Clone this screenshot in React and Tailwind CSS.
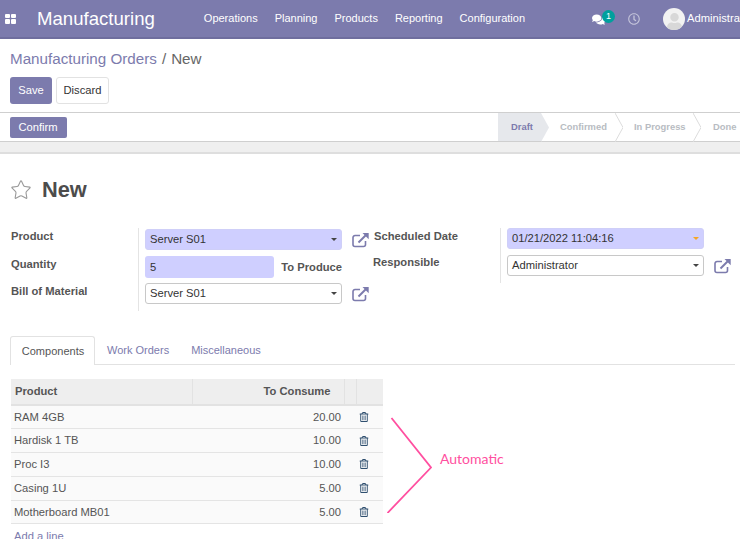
import React from 'react'
import { FaComments, FaRegClock, FaRegTrashAlt, FaUser } from 'react-icons/fa'
import { Star } from 'lucide-react'

const font = { fontFamily: '"Liberation Sans", Arial, sans-serif' }

const menus = ['Operations', 'Planning', 'Products', 'Reporting', 'Configuration']

const lines = [
  ['RAM 4GB', '20.00'],
  ['Hardisk 1 TB', '10.00'],
  ['Proc I3', '10.00'],
  ['Casing 1U', '5.00'],
  ['Motherboard MB01', '5.00'],
]

const ExternalIcon = () => (
  <svg width="18" height="16" viewBox="0 0 18 16" fill="none" stroke="#7c7bad" strokeWidth="1.6" className="shrink-0">
    <path d="M13.5 9v3.5a2 2 0 0 1-2 2H3a2 2 0 0 1-2-2V5.5a2 2 0 0 1 2-2h5" />
    <path d="M6.5 10.5 14.5 2.5" strokeWidth="2" />
    <path d="M10.5 1h6.2v6.2z" fill="#7c7bad" stroke="none" />
  </svg>
)

const Caret = ({ color = 'border-t-[#444]' }) => (
  <span className={`h-0 w-0 border-x-[3.5px] border-t-[3.5px] border-x-transparent ${color}`} />
)

const Select = ({ value, required, caret }) => (
  <div
    className={`flex h-[21px] w-[197px] items-center justify-between rounded-[3px] border pl-[4px] pr-[4px] text-[11.2px] text-[#333] ${
      required ? 'border-[#cfcff8] bg-[#cfcfff]' : 'border-[#c8c8c8] bg-white'
    }`}
  >
    <span>{value}</span>
    <Caret color={caret || 'border-t-[#444]'} />
  </div>
)

const Step = ({ label, width, active, last }) => (
  <div className={`relative flex h-full items-center text-[9.4px] font-bold ${width} ${active ? 'bg-[#e6e8ec] text-[#7c7bad]' : 'text-[#b8bcc2]'}`}>
    {label}
    {!last && (
      <svg width="8" height="29" viewBox="0 0 8 29" className="absolute -right-[8px] top-0 z-10">
        <path d="M0 0 8 14.5 0 29" fill={active ? '#e6e8ec' : '#fff'} stroke={active ? 'none' : '#dcdcdc'} />
      </svg>
    )}
  </div>
)

const App = () => {
  return (
    <div className="h-[539px] w-[740px] overflow-hidden bg-white text-[11.2px] text-[#444]" style={font}>
      <div className="flex h-[39px] items-center whitespace-nowrap border-b-2 border-[#6f6e9e] bg-[#7c7bad] text-white">
        <div className="ml-[5px] grid h-[10px] w-[11px] shrink-0 grid-cols-2 gap-[1px]">
          <span className="rounded-[1px] bg-white" />
          <span className="rounded-[1px] bg-white" />
          <span className="rounded-[1px] bg-white" />
          <span className="rounded-[1px] bg-white" />
        </div>
        <span className="ml-[21px] shrink-0 text-[18.6px]">Manufacturing</span>
        <div className="ml-[49px] flex shrink-0 gap-[17px] text-[11px]">
          {menus.map((m) => (
            <span key={m}>{m}</span>
          ))}
        </div>
        <div className="relative ml-[67px] mt-[2px] shrink-0">
          <FaComments size={13} />
          <span className="absolute -right-[10px] -top-[3px] flex h-[13px] w-[13px] items-center justify-center rounded-full bg-[#00a09d] text-[9px]">1</span>
        </div>
        <FaRegClock size={12} className="ml-[23px] shrink-0 text-[#c4c4da]" />
        <div className="ml-[23px] flex h-[22px] w-[22px] shrink-0 items-end justify-center overflow-hidden rounded-full bg-[#f2f2f2]">
          <FaUser size={17} className="text-[#d8d8d8]" />
        </div>
        <span className="ml-[2px] shrink-0">Administrator</span>
      </div>

      <div className="px-[10px] pt-[9px]">
        <div className="text-[15.2px] leading-[22px]">
          <span className="text-[#7c7bad]">Manufacturing Orders</span>
          <span className="mx-[5px] text-[#666]">/</span>
          <span className="text-[#666]">New</span>
        </div>
        <div className="mt-[7px] flex gap-[4px]">
          <button className="h-[27px] w-[42px] rounded-[3px] bg-[#7c7bad] text-white">Save</button>
          <button className="h-[27px] w-[53px] rounded-[3px] border border-[#e2e2e2] bg-white text-[#333]">Discard</button>
        </div>
      </div>

      <div className="mt-[8px] flex h-[30px] items-center justify-between border-y border-[#cfcfcf]">
        <button className="ml-[9.5px] h-[21px] w-[57px] rounded-[2px] bg-[#7c7bad] text-white">Confirm</button>
        <div className="flex h-full">
          <Step label="Draft" width="w-[43px] pl-[13px]" active />
          <Step label="Confirmed" width="w-[74px] pl-[19px]" />
          <Step label="In Progress" width="w-[78px] pl-[19px]" />
          <Step label="Done" width="w-[47px] pl-[20px]" last />
        </div>
      </div>
      <div className="h-[12px] border-b-2 border-[#dedede] bg-[#efefef]" />

      <div className="flex items-center pl-[10px] pt-[23px]">
        <Star size={22} strokeWidth={1.2} className="text-[#999]" />
        <span className="ml-[10px] text-[21.8px] font-bold leading-[26px] text-[#4c4c4c]">New</span>
      </div>

      <div className="mt-[25px] flex">
        <div className="w-[138px] pl-[11px] font-bold leading-[14px] text-[#555]">
          <div className="mt-[1px]">Product</div>
          <div className="mt-[14px]">Quantity</div>
          <div className="mt-[13px]">Bill of Material</div>
        </div>
        <div className="flex h-[83px] w-[236px] flex-col border-l border-[#e4e4e4] pl-[6px] pt-[1px]">
          <div className="flex items-center gap-[10px]">
            <Select value="Server S01" required />
            <ExternalIcon />
          </div>
          <div className="mt-[6px] flex h-[22px] w-[197px] items-center justify-between">
            <div className="flex h-[22px] w-[129px] items-center rounded-[3px] bg-[#cfcfff] pl-[5px] text-[#333]">5</div>
            <span className="font-bold text-[#555]">To Produce</span>
          </div>
          <div className="mt-[5px] flex items-center gap-[10px]">
            <Select value="Server S01" />
            <ExternalIcon />
          </div>
        </div>
        <div className="w-[126px] font-bold leading-[14px] text-[#555]">
          <div className="mt-[1px]">Scheduled Date</div>
          <div className="-ml-px mt-[12px]">Responsible</div>
        </div>
        <div className="flex h-[55px] flex-col gap-[6px] border-l border-[#e4e4e4] pl-[6px]">
          <Select value="01/21/2022 11:04:16" required caret="border-t-[#f5a623]" />
          <div className="flex items-center gap-[10px]">
            <Select value="Administrator" />
            <ExternalIcon />
          </div>
        </div>
      </div>

      <div className="ml-[10px] mr-[5px] mt-[26px] flex h-[28px] items-end border-b border-[#e2e2e2] text-[11px]">
        <div className="-mb-[1px] flex h-[29px] w-[85px] items-center justify-center rounded-t-[3px] border border-b-0 border-[#e2e2e2] bg-white pl-[1px] text-[#555]">Components</div>
        <div className="flex h-[28px] items-center pl-[12px] text-[#7c7bad]">Work Orders</div>
        <div className="flex h-[28px] items-center pl-[22px] text-[#7c7bad]">Miscellaneous</div>
      </div>

      <div className="ml-[11px] mt-[14px] flex">
        <table className="w-[372px] table-fixed border-collapse">
          <colgroup>
            <col className="w-[181px]" />
            <col className="w-[152px]" />
            <col className="w-[12px]" />
            <col className="w-[27px]" />
          </colgroup>
          <thead>
            <tr className="h-[26px] border-b-2 border-[#e2e2e2] bg-[#eeeeee] font-bold text-[#555]">
              <th className="border-r border-[#e2e2e2] pl-[4px] text-left">Product</th>
              <th className="border-r border-[#e2e2e2] pr-[13px] text-right">To Consume</th>
              <th className="border-r border-[#e2e2e2]" />
              <th />
            </tr>
          </thead>
          <tbody>
            {lines.map(([name, qty]) => (
              <tr key={name} className="h-[23.8px] border-b border-[#e4e4e4] bg-[#fafafa] text-[#555]">
                <td className="pl-[3px]">{name}</td>
                <td className="pr-[3px] text-right">{qty}</td>
                <td />
                <td className="pl-[2.5px]">
                  <FaRegTrashAlt size={10} className="text-[#2f4f6f]" />
                </td>
              </tr>
            ))}
          </tbody>
        </table>
        <div className="relative flex-1">
          <svg width="60" height="100" viewBox="0 0 60 100" fill="none" stroke="#ff4fa0" strokeWidth="1.8" className="absolute left-0 top-[34px]">
            <path d="M8.5 5 48 54.500 4.500 100" />
          </svg>
          <span className="absolute left-[57px] top-[69px] text-[14px] text-[#ff4fa0]" style={{ fontFamily: 'Lato, sans-serif' }}>Automatic</span>
        </div>
      </div>
      <div className="ml-[14px] mt-[4px] text-[#7c7bad]">Add a line</div>
    </div>
  )
}

export default App
